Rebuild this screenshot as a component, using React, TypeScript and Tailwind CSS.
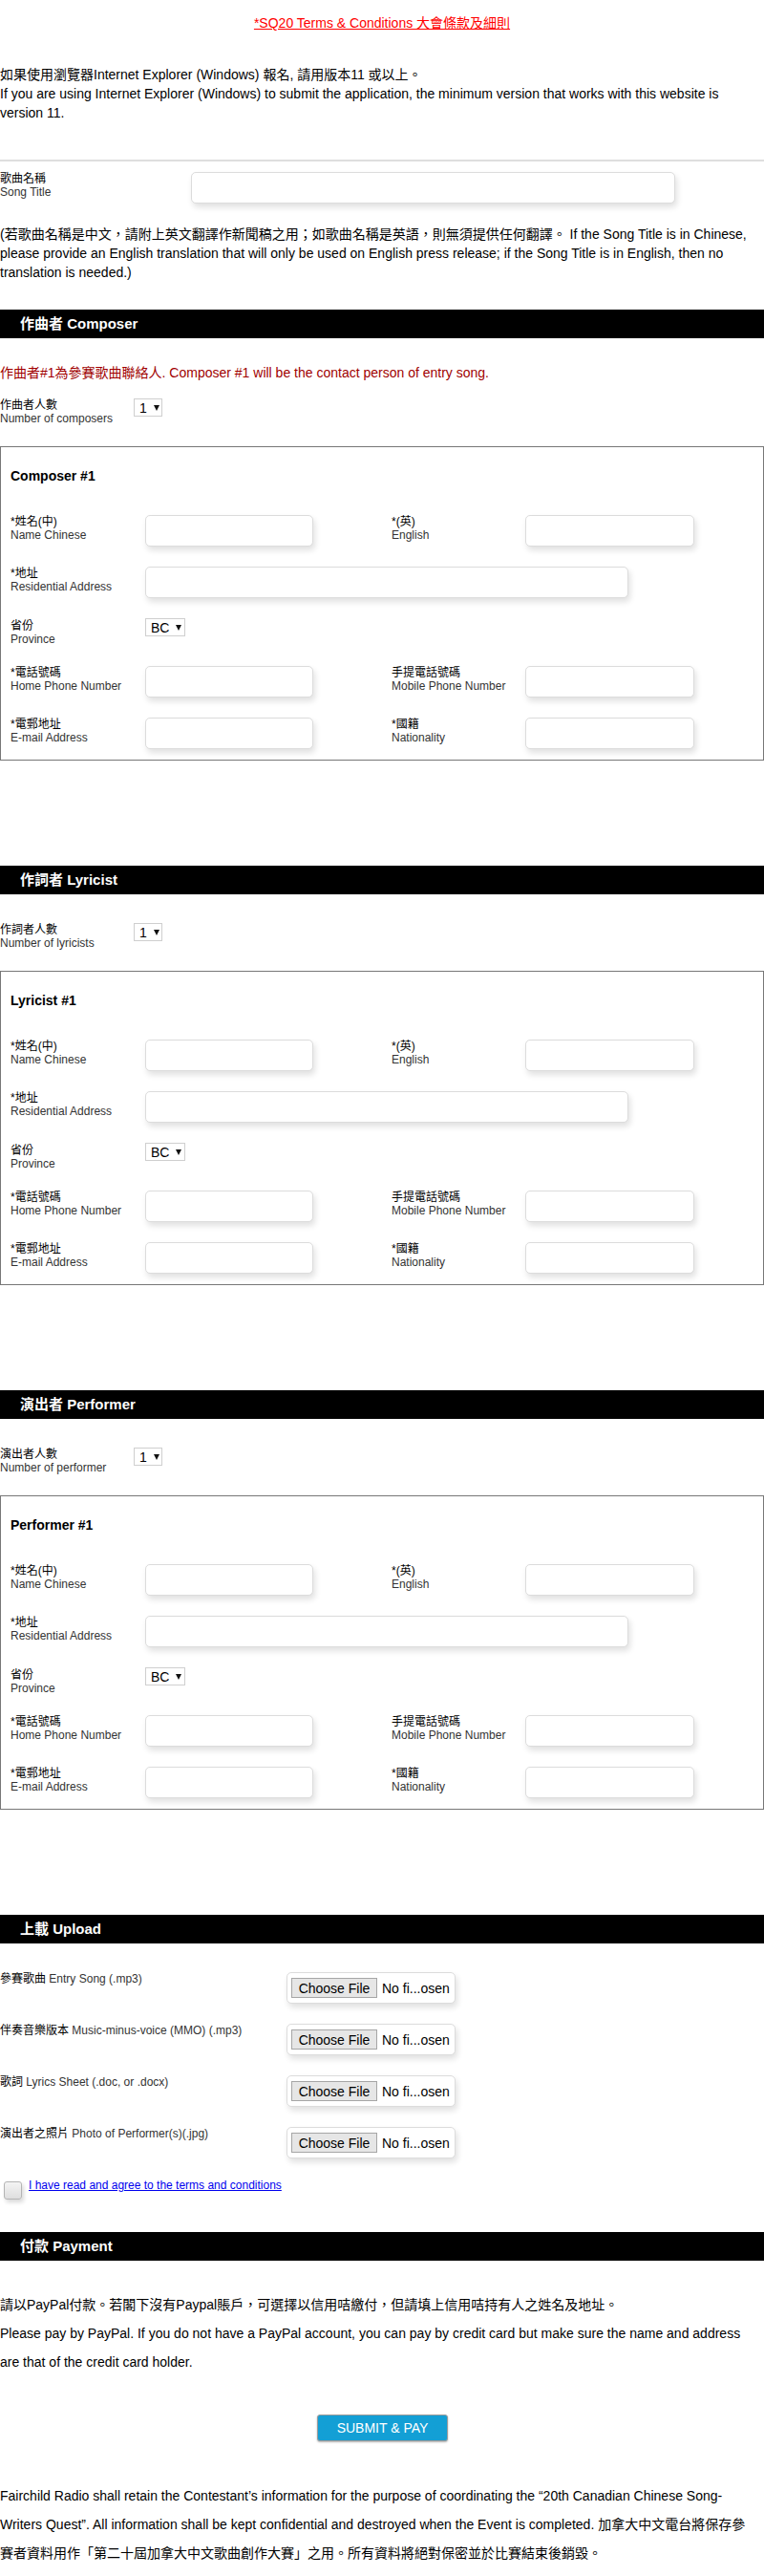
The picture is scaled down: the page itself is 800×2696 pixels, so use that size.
import React from "react";

function Label({ zh, en, w = "w-[141px]" }: { zh: string; en: string; w?: string }) {
  return (
    <div className={`${w} shrink-0 text-[12px] leading-[14px]`}>
      <div className="text-black">{zh}</div>
      <div className="text-[#333]">{en}</div>
    </div>
  );
}

function TextBox({ w }: { w: string }) {
  return (
    <div
      className={`${w} h-[33px] shrink-0 rounded-[5px] border border-[#dcdcdc] bg-white shadow-[2px_4px_6px_rgba(0,0,0,0.12)]`}
    />
  );
}

function Arrow() {
  return (
    <svg width="6" height="7" viewBox="0 0 6 7" className="shrink-0">
      <polygon points="0,1 6,1 3,7" fill="#111" />
    </svg>
  );
}

function FakeSelect({ value, w }: { value: string; w: string }) {
  return (
    <div
      className={`${w} flex h-[19px] shrink-0 items-center border border-[#cfcfcf] bg-white pl-[5px] text-[14px] leading-none text-black`}
    >
      <span>{value}</span>
      <span className="ml-[7px] flex items-center">
        <Arrow />
      </span>
    </div>
  );
}

function Header({ title, className = "" }: { title: string; className?: string }) {
  return (
    <div className={`flex h-[30px] items-center bg-black pl-[21px] text-[15px] font-bold text-white ${className}`}>
      {title}
    </div>
  );
}

function CountRow({ zh, en, className = "" }: { zh: string; en: string; className?: string }) {
  return (
    <div className={`flex items-start ${className}`}>
      <Label zh={zh} en={en} w="w-[140px]" />
      <FakeSelect value="1" w="w-[30px]" />
    </div>
  );
}

function PersonBox({ title, className = "" }: { title: string; className?: string }) {
  return (
    <div className={`border border-[#777] px-[10px] pt-[22px] pb-[11px] ${className}`}>
      <div className="mb-[33px] h-[16px] text-[14px] font-bold leading-[16px] text-black">{title}</div>
      <div className="mb-[21px] flex items-start">
        <Label zh="*姓名(中)" en="Name Chinese" />
        <TextBox w="w-[176px]" />
        <div className="w-[82px] shrink-0" />
        <Label zh="*(英)" en="English" w="w-[140px]" />
        <TextBox w="w-[177px]" />
      </div>
      <div className="mb-[21px] flex items-start">
        <Label zh="*地址" en="Residential Address" />
        <TextBox w="w-[506px]" />
      </div>
      <div className="mb-[21px] flex h-[29px] items-start">
        <div className="pt-[1px]">
          <Label zh="省份" en="Province" />
        </div>
        <FakeSelect value="BC" w="w-[42px]" />
      </div>
      <div className="mb-[21px] flex items-start">
        <Label zh="*電話號碼" en="Home Phone Number" />
        <TextBox w="w-[176px]" />
        <div className="w-[82px] shrink-0" />
        <Label zh="手提電話號碼" en="Mobile Phone Number" w="w-[140px]" />
        <TextBox w="w-[177px]" />
      </div>
      <div className="flex items-start">
        <Label zh="*電郵地址" en="E-mail Address" />
        <TextBox w="w-[176px]" />
        <div className="w-[82px] shrink-0" />
        <Label zh="*國籍" en="Nationality" w="w-[140px]" />
        <TextBox w="w-[177px]" />
      </div>
    </div>
  );
}

function FileRow({ zh, en, className = "" }: { zh: string; en: string; className?: string }) {
  return (
    <div className={`flex h-[33px] items-start ${className}`}>
      <div className="w-[300px] shrink-0 text-[12px] leading-[14px]">
        <span className="text-black">{zh}</span> <span className="text-[#333]">{en}</span>
      </div>
      <div className="flex h-[33px] w-[177px] shrink-0 items-center rounded-[5px] border border-[#dcdcdc] bg-white pl-[4px] shadow-[2px_4px_6px_rgba(0,0,0,0.12)]">
        <span className="flex h-[21px] w-[90px] shrink-0 items-center justify-center border border-[#a6a6a6] bg-[#e6e6e6] text-[14px] leading-none text-black">
          Choose File
        </span>
        <span className="ml-[5px] whitespace-nowrap text-[14px] leading-none text-black">No fi...osen</span>
      </div>
    </div>
  );
}

export default function App() {
  return (
    <div className="min-h-[2696px] w-[800px] bg-white font-['Liberation_Sans',Arial,'Noto_Sans_CJK_TC',sans-serif] text-[14px] text-black">
      <div className="pt-[14px] text-center text-[14px] leading-[20px]">
        <a href="#" className="text-[#ff0000] underline">
          *SQ20 Terms &amp; Conditions 大會條款及細則
        </a>
      </div>

      <p className="mt-[34px] text-[14px] leading-[20px]">
        如果使用瀏覽器Internet Explorer (Windows) 報名, 請用版本11 或以上。
        <br />
        If you are using Internet Explorer (Windows) to submit the application, the minimum version that works with
        this website is version 11.
      </p>

      <div className="mt-[39px] h-[2px] bg-[#dedede]" />

      <div className="mt-[11px] flex items-start">
        <Label zh="歌曲名稱" en="Song Title" w="w-[200px]" />
        <TextBox w="w-[507px]" />
      </div>

      <p className="mt-[22px] text-[14px] leading-[20px]">
        (若歌曲名稱是中文，請附上英文翻譯作新聞稿之用；如歌曲名稱是英語，則無須提供任何翻譯。 If the Song Title is in
        Chinese, please provide an English translation that will only be used on English press release; if the Song
        Title is in English, then no translation is needed.)
      </p>

      <Header title="作曲者 Composer" className="mt-[29px]" />
      <p className="mt-[26px] text-[14px] leading-[20px] text-[#a00000]">
        作曲者#1為參賽歌曲聯絡人. Composer #1 will be the contact person of entry song.
      </p>
      <CountRow zh="作曲者人數" en="Number of composers" className="mt-[17px]" />
      <PersonBox title="Composer #1" className="mt-[22px]" />

      <Header title="作詞者 Lyricist" className="mt-[110px]" />
      <CountRow zh="作詞者人數" en="Number of lyricists" className="mt-[30px]" />
      <PersonBox title="Lyricist #1" className="mt-[22px]" />

      <Header title="演出者 Performer" className="mt-[110px]" />
      <CountRow zh="演出者人數" en="Number of performer" className="mt-[30px]" />
      <PersonBox title="Performer #1" className="mt-[22px]" />

      <Header title="上載 Upload" className="mt-[110px]" />
      <FileRow zh="參賽歌曲" en="Entry Song (.mp3)" className="mt-[30px]" />
      <FileRow zh="伴奏音樂版本" en="Music-minus-voice (MMO) (.mp3)" className="mt-[21px]" />
      <FileRow zh="歌詞" en="Lyrics Sheet (.doc, or .docx)" className="mt-[21px]" />
      <FileRow zh="演出者之照片" en="Photo of Performer(s)(.jpg)" className="mt-[21px]" />

      <div className="mt-[21px] flex h-[22px] items-start">
        <div className="ml-[4px] mt-[3px] h-[19px] w-[19px] shrink-0 rounded-[3px] border border-[#b4b4b4] bg-gradient-to-b from-[#f4f4f4] to-[#dedede] shadow-[2px_3px_4px_rgba(0,0,0,0.15)]" />
        <a href="#" className="ml-[7px] text-[12px] leading-[14px] text-[#0000ee] underline">
          I have read and agree to the terms and conditions
        </a>
      </div>

      <Header title="付款 Payment" className="mt-[34px]" />
      <p className="mt-[31px] w-[790px] text-[14px] leading-[30px]">
        請以PayPal付款。若閣下沒有Paypal賬戶，可選擇以信用咭繳付，但請填上信用咭持有人之姓名及地址。
        <br />
        Please pay by PayPal. If you do not have a PayPal account, you can pay by credit card but make sure the name and
        address are that of the credit card holder.
      </p>

      <div className="mt-[40px] flex justify-center pl-[1px]">
        <button className="flex h-[28px] w-[137px] items-center justify-center rounded-[3px] border border-[#9a9a9a] bg-[#139fd5] text-[14px] leading-none text-white shadow-[0_1px_2px_rgba(0,0,0,0.3)]">
          SUBMIT &amp; PAY
        </button>
      </div>

      <p className="mt-[42px] w-[790px] text-[14px] leading-[30px]">
        Fairchild Radio shall retain the Contestant’s information for the purpose of coordinating the “20th Canadian
        Chinese Song-Writers Quest”. All information shall be kept confidential and destroyed when the Event is
        completed. 加拿大中文電台將保存參賽者資料用作「第二十屆加拿大中文歌曲創作大賽」之用。所有資料將絕對保密並於比賽結束後銷毀。
      </p>
    </div>
  );
}
